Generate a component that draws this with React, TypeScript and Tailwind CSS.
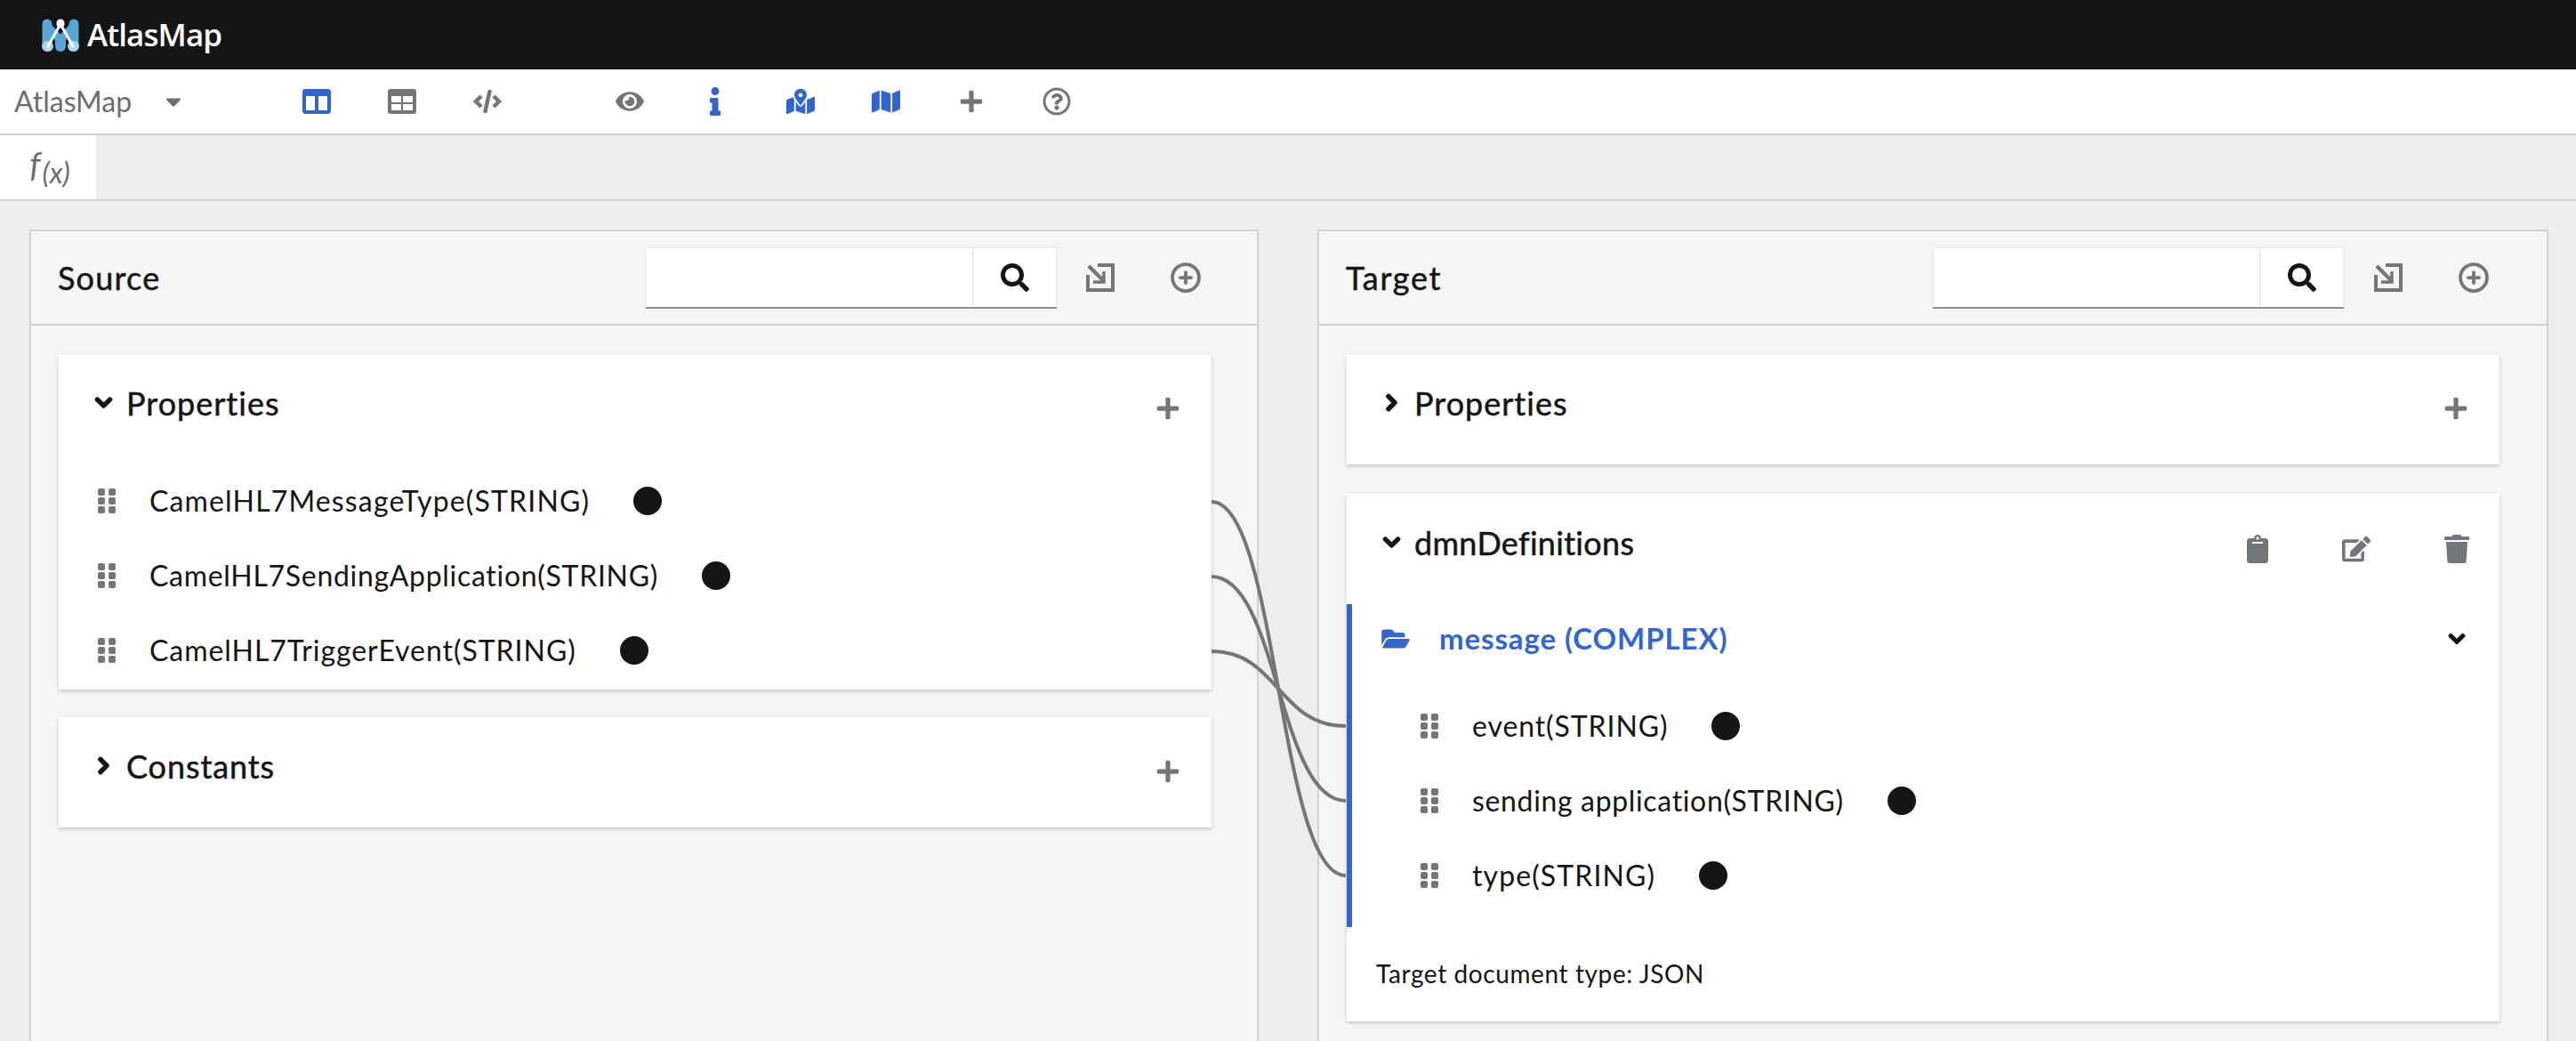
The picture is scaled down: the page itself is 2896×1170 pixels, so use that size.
import React from "react";
import {
  FaCaretDown, FaChevronDown, FaChevronRight, FaClipboard, FaColumns, FaEdit, FaEye, FaFolderOpen,
  FaInfo, FaMap, FaMapMarkedAlt, FaPlus, FaRegQuestionCircle, FaSearch, FaTrash,
} from "react-icons/fa";
import { FiPlusCircle } from "react-icons/fi";

const font = "font-['Lato','Liberation_Sans',sans-serif]";
const heavy = "[-webkit-text-stroke:0.5px_#151515]";
const bold = "[stroke-width:50px] [stroke:#151515]";

function Grip() {
  return (
    <svg viewBox="0 0 20 28" className="w-[20px] h-[28px] shrink-0" fill="#737679">
      {[0, 10, 20].map((y) => (
        <g key={y}>
          <rect x="0" y={y} width="8" height="8" rx="2" />
          <rect x="12" y={y} width="8" height="8" rx="2" />
        </g>
      ))}
    </svg>
  );
}

function TableIcon() {
  return (
    <svg viewBox="0 0 32 28" className="w-[32px] h-[28px]">
      <path fill="#737679" fillRule="evenodd" d="M3 0h26a3 3 0 0 1 3 3v22a3 3 0 0 1-3 3H3a3 3 0 0 1-3-3V3a3 3 0 0 1 3-3zM4 8v7h11V8zm13 0v7h11V8zM4 17v7h11v-7zm13 0v7h11v-7z" />
    </svg>
  );
}

function CodeIcon() {
  return (
    <svg viewBox="0 0 32 26" className="w-[32px] h-[26px]" fill="none" stroke="#737679">
      <path d="M9 7l-6 6 6 6M23 7l6 6-6 6" strokeWidth="4.5" />
      <path d="M18.5 2l-5 22" strokeWidth="4.5" strokeLinecap="round" />
    </svg>
  );
}

function ExportIcon() {
  return (
    <svg viewBox="0 0 32 32" className="w-[32px] h-[32px]" fill="none" stroke="#737679">
      <path d="M13 2h17v28H2V13" strokeWidth="4" />
      <path d="M3 3l16 16" strokeWidth="4.5" />
      <path d="M20 9v12H8" strokeWidth="3.5" />
    </svg>
  );
}

function Logo() {
  return (
    <svg viewBox="0 0 42 37" className="w-[42px] h-[37px] shrink-0">
      <g strokeLinecap="round" fill="none">
        <path d="M6 6v24M36 6v24" stroke="#5aa7d6" strokeWidth="11" />
        <path d="M6 8L21 24L36 8" stroke="#5aa7d6" strokeWidth="9" />
        <path d="M21 24v7" stroke="#5aa7d6" strokeWidth="12" />
        <path d="M6 31h1M36 31h-1" stroke="#acd6ee" strokeWidth="12" />
        <path d="M21 6L7 31M21 6l14 25" stroke="#ffffff" strokeWidth="3" />
        <path d="M21 5v1" stroke="#ffffff" strokeWidth="9" />
      </g>
    </svg>
  );
}

function ToolIcon({ children }: { children: React.ReactNode }) {
  return <div className="w-[96px] h-full flex items-center justify-center shrink-0">{children}</div>;
}

function Row({ label, track, grip = "pl-[44px]" }: { label: string; track: string; grip?: string }) {
  return (
    <div className={`h-[84px] flex items-center gap-[38px] ${grip}`}>
      <Grip />
      <div className="flex items-center gap-[49px]">
        <span className={`text-[32px] leading-none text-[#151515] whitespace-nowrap ${track}`}>{label}</span>
        <span className="w-[32px] h-[32px] rounded-full bg-[#151515] shrink-0" />
      </div>
    </div>
  );
}

function CardHeader({ title, open, track, h = "h-[122px]" }: { title: string; open: boolean; track: string; h?: string }) {
  return (
    <div className={`${h} flex items-center pl-[38px] pr-[35px]`}>
      <div className="w-[24px] flex justify-center mt-[-16px] shrink-0">
        {open ? (
          <FaChevronDown className={`w-[21px] h-[21px] text-[#151515] ${bold}`} />
        ) : (
          <FaChevronRight className={`w-[21px] h-[21px] text-[#151515] ${bold}`} />
        )}
      </div>
      <span className={`ml-[14px] text-[36px] leading-none text-[#151515] mt-[-14px] ${heavy} ${track}`}>{title}</span>
      <FaPlus className="ml-auto w-[28px] h-[28px] text-[#737679] mt-[-2px]" />
    </div>
  );
}

function PanelHeader({ title, track, searchGap, iconsRight }: { title: string; track: string; searchGap: string; iconsRight: string }) {
  return (
    <div className="h-[106px] border-b-2 border-[#d2d2d2] flex items-center pl-[30px]">
      <span className={`text-[36px] leading-none text-[#151515] ${heavy} ${track}`}>{title}</span>
      <div className={`ml-auto flex items-center h-[70px] bg-white border-x-2 border-t-2 border-[#ededed] border-b-2 border-b-[#8a8d90] ${searchGap}`}>
        <div className="w-[368px] h-full border-r-2 border-[#ededed]" />
        <div className="w-[92px] h-full flex items-center justify-center">
          <FaSearch className="w-[32px] h-[32px] text-[#151515]" />
        </div>
      </div>
      <div className={`absolute flex items-center gap-[62px] ${iconsRight}`}>
        <ExportIcon />
        <FiPlusCircle strokeWidth={2.5} className="w-[36px] h-[36px] text-[#737679]" />
      </div>
    </div>
  );
}

export default function App() {
  return (
    <div className={`w-[2896px] h-[1170px] overflow-hidden relative flex flex-col bg-[#ededed] ${font}`}>
      <header className="h-[78px] bg-[#151515] flex items-center pl-[47px] gap-[9px] shrink-0">
        <Logo />
        <span className="text-[35px] leading-none font-semibold text-white font-['Open_Sans',sans-serif] tracking-[-0.9px] mt-[-2px]">AtlasMap</span>
      </header>

      <div className="h-[74px] bg-white border-b-2 border-[#d2d2d2] flex items-center shrink-0">
        <span className="ml-[16px] text-[32px] leading-none text-[#6a6e73] w-[131px] whitespace-nowrap">AtlasMap</span>
        <FaCaretDown className="ml-[34px] w-[28px] h-[28px] text-[#6a6e73] shrink-0" />
        <div className="ml-[99px] flex h-full">
          <ToolIcon><FaColumns className="w-[32px] h-[32px] text-[#3366cc]" /></ToolIcon>
          <ToolIcon><TableIcon /></ToolIcon>
          <ToolIcon><CodeIcon /></ToolIcon>
          <div className="w-[64px]" />
          <ToolIcon><FaEye className="w-[32px] h-[32px] text-[#737679]" /></ToolIcon>
          <ToolIcon><FaInfo className="w-[32px] h-[32px] text-[#3366cc]" /></ToolIcon>
          <ToolIcon><FaMapMarkedAlt className="w-[32px] h-[32px] text-[#3366cc]" /></ToolIcon>
          <ToolIcon><FaMap className="w-[32px] h-[32px] text-[#3366cc]" /></ToolIcon>
          <ToolIcon><FaPlus className="w-[28px] h-[28px] text-[#737679]" /></ToolIcon>
          <ToolIcon><FaRegQuestionCircle className="w-[32px] h-[32px] text-[#737679]" /></ToolIcon>
        </div>
      </div>

      <div className="h-[74px] border-b-2 border-[#d2d2d2] flex shrink-0">
        <div className="w-[108px] h-full bg-white flex items-center justify-center text-[#6a6e73] italic pl-[4px]">
          <span className="text-[38px] leading-none mt-[-8px]">f</span>
          <span className="text-[32px] leading-none mt-[12px] ml-[2px]">(x)</span>
        </div>
      </div>

      <div className="flex-1 flex pl-[33px] pt-[32px] gap-[66px] min-h-0">
        <section className="w-[1382px] bg-[#f5f5f5] border-2 border-b-0 border-[#d2d2d2] relative">
          <PanelHeader title="Source" track="tracking-[1.2px]" searchGap="mr-[224px]" iconsRight="right-[62px]" />
          <div className="w-[1296px] ml-[31px] pt-[33px] flex flex-col gap-[31px]">
            <div className="bg-white h-[376px] shadow-[0_2px_4px_rgba(3,3,3,0.2)]">
              <CardHeader title="Properties" open track="tracking-[1px]" />
              <Row label="CamelHL7MessageType(STRING)" track="tracking-[1.15px]" />
              <Row label="CamelHL7SendingApplication(STRING)" track="tracking-[0.7px]" />
              <Row label="CamelHL7TriggerEvent(STRING)" track="tracking-[0.95px]" />
            </div>
            <div className="bg-white h-[124px] shadow-[0_2px_4px_rgba(3,3,3,0.2)]">
              <CardHeader title="Constants" open={false} track="tracking-[0.9px]" h="h-[124px]" />
            </div>
          </div>
        </section>

        <section className="w-[1384px] bg-[#f5f5f5] border-2 border-b-0 border-[#d2d2d2] relative">
          <PanelHeader title="Target" track="tracking-[1.7px]" searchGap="mr-[227px]" iconsRight="right-[64px]" />
          <div className="w-[1296px] ml-[31px] pt-[33px] flex flex-col gap-[33px]">
            <div className="bg-white h-[123px] shadow-[0_2px_4px_rgba(3,3,3,0.2)]">
              <CardHeader title="Properties" open={false} track="tracking-[1px]" h="h-[122px]" />
            </div>
            <div className="bg-white h-[593px] shadow-[0_2px_4px_rgba(3,3,3,0.2)] flex flex-col">
              <div className="h-[124px] flex items-center pl-[38px] shrink-0">
                <div className="w-[24px] flex justify-center mt-[-16px] shrink-0">
                  <FaChevronDown className={`w-[21px] h-[21px] text-[#151515] ${bold}`} />
                </div>
                <span className={`ml-[14px] text-[36px] leading-none text-[#151515] mt-[-14px] tracking-[0.3px] ${heavy}`}>dmnDefinitions</span>
                <div className="ml-auto flex items-center mr-[34px] gap-[83px]">
                  <FaClipboard className="w-[24px] h-[32px] text-[#737679]" />
                  <FaEdit className="w-[32px] h-[32px] text-[#737679]" />
                  <FaTrash className="w-[28px] h-[32px] text-[#737679]" />
                </div>
              </div>
              <div className="h-[363px] border-l-[6px] border-[#3366cc] shrink-0">
                <div className="h-[95px] pb-[17px] flex items-center pl-[33px] pr-[38px]">
                  <FaFolderOpen className="w-[32px] h-[28px] text-[#3366cc] shrink-0" />
                  <span className="ml-[33px] mt-[-2px] text-[33px] leading-none font-bold text-[#3366cc] whitespace-nowrap tracking-[0.9px]">message (COMPLEX)</span>
                  <FaChevronDown className={`ml-auto w-[20px] h-[20px] text-[#151515] ${bold}`} />
                </div>
                <Row label="event(STRING)" track="tracking-[0.9px]" grip="pl-[77px]" />
                <Row label="sending application(STRING)" track="tracking-[0.65px]" grip="pl-[77px]" />
                <Row label="type(STRING)" track="tracking-[1.1px]" grip="pl-[77px]" />
              </div>
              <div className="pl-[33px] pt-[38px] text-[28px] leading-none text-[#151515] tracking-[0.6px]">Target document type: JSON</div>
            </div>
          </div>
        </section>
      </div>

      <svg className="absolute inset-0 w-[2896px] h-[1170px] pointer-events-none" fill="none" stroke="#737679" strokeWidth="4">
        <path d="M1362 564C1437 564 1437 984 1513 984" />
        <path d="M1362 648C1437 648 1437 900 1513 900" />
        <path d="M1362 732C1437 732 1437 816 1513 816" />
      </svg>
    </div>
  );
}
